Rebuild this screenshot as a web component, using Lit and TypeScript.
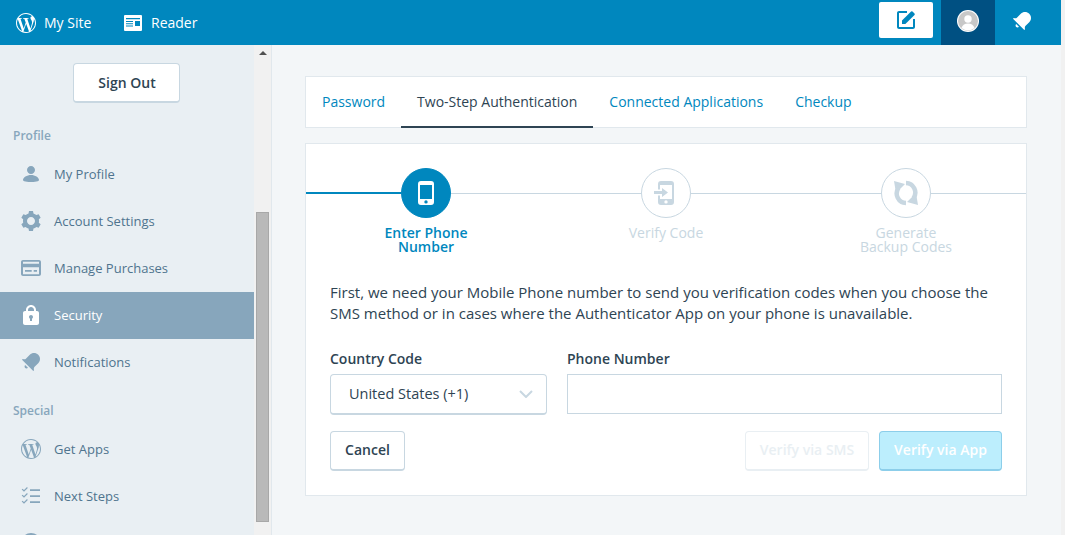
import { LitElement, html, css, svg } from "lit";
import { customElement } from "lit/decorators.js";

const P = {
  wp: "M12 2C6.477 2 2 6.477 2 12s4.477 10 10 10 10-4.477 10-10S17.523 2 12 2zM3.01 12c0-1.304.28-2.54.78-3.66l4.29 11.75C5.08 18.63 3.01 15.56 3.01 12zm8.99 8.99c-.88 0-1.73-.13-2.54-.37l2.7-7.84 2.76 7.57c.02.04.04.09.06.13-.93.33-1.93.51-2.98.51zm1.24-13.21c.54-.03 1.03-.09 1.03-.09.48-.06.43-.77-.06-.74 0 0-1.46.11-2.4.11-.88 0-2.37-.11-2.37-.11-.48-.03-.54.71-.06.74 0 0 .46.06.94.09l1.4 3.84-1.97 5.9-3.27-9.74c.54-.03 1.03-.09 1.03-.09.48-.06.43-.77-.06-.74 0 0-1.46.11-2.4.11-.17 0-.37 0-.58-.01C6.1 4.62 8.86 3.01 12 3.01c2.34 0 4.47.89 6.07 2.36-.04 0-.08-.01-.12-.01-.88 0-1.51.77-1.51 1.6 0 .74.43 1.37.88 2.11.34.6.74 1.37.74 2.48 0 .77-.3 1.66-.68 2.91l-.9 3-3.24-9.68zm3.28 12.01l2.74-7.92c.51-1.28.68-2.3.68-3.21 0-.33-.02-.64-.06-.92.7 1.28 1.1 2.75 1.1 4.32 0 3.33-1.8 6.23-4.48 7.8z",
  bell: "M6.14 14.97l2.828 2.827c-.362.362-.862.586-1.414.586-1.105 0-2-.895-2-2 0-.552.224-1.052.586-1.413zm8.867 5.324L14.3 21 3 9.7l.706-.707 1.102.157c.754.108 1.69-.122 2.077-.51l3.885-3.884c2.34-2.34 6.135-2.34 8.475 0s2.34 6.135 0 8.475l-3.885 3.886c-.388.388-.618 1.323-.51 2.077l.157 1.1z",
  cog: "M20 12c0-.568-.06-1.122-.174-1.656l1.834-1.612-2-3.464-2.322.786c-.82-.736-1.787-1.308-2.86-1.657L14 2h-4l-.48 2.396c-1.07.35-2.04.92-2.858 1.657L4.34 5.268l-2 3.464 1.834 1.612C4.06 10.878 4 11.432 4 12s.06 1.122.174 1.656L2.34 15.268l2 3.464 2.322-.786c.82.736 1.787 1.308 2.86 1.657L10 22h4l.48-2.396c1.07-.35 2.04-.92 2.858-1.657l2.322.786 2-3.464-1.834-1.613c.113-.535.174-1.09.174-1.657zm-8 4c-2.21 0-4-1.79-4-4s1.79-4 4-4 4 1.79 4 4-1.79 4-4 4z",
  user: "M12 4c2.21 0 4 1.79 4 4s-1.79 4-4 4-4-1.79-4-4 1.79-4 4-4zm0 16s8 0 8-2c0-2.4-3.9-5-8-5s-8 2.6-8 5c0 2 8 2 8 2z",
  card: "M4 4h16c1.105 0 2 .895 2 2v12c0 1.105-.895 2-2 2H4c-1.105 0-2-.895-2-2V6c0-1.105.895-2 2-2zM4 5.800v1.900h16V5.800zM4 11.300v7h16v-7zM6 14h6.700v1.700H6zM14.700 14H18v1.700h-3.300z",
  lock: "M18 8h-1V7c0-2.757-2.243-5-5-5S7 4.243 7 7v1H6c-1.105 0-2 .895-2 2v10c0 1.105.895 2 2 2h12c1.105 0 2-.895 2-2V10c0-1.105-.895-2-2-2zM9 7c0-1.654 1.346-3 3-3s3 1.346 3 3v1H9V7zm4 8.723V18h-2v-2.277c-.595-.346-1-.984-1-1.723 0-1.105.895-2 2-2s2 .895 2 2c0 .738-.405 1.376-1 1.723z",
  list: "M11 5.300h10v1.700H11zM11 11.300h10v1.700H11zM11 17.300h10v1.700H11zM3.500 4.800l1.500 1.300 3-3 .8.800-3.800 3.800-2.300-2.100zM3.500 10.800l1.500 1.300 3-3 .8.800-3.800 3.800-2.300-2.100zM3.500 16.800l1.500 1.300 3-3 .8.800-3.800 3.800-2.300-2.100z",
  circle: "M12 2C6.477 2 2 6.477 2 12s4.477 10 10 10 10-4.477 10-10S17.523 2 12 2z",
};

const icon = (d: string, cls = "") =>
  html`<svg class="ico ${cls}" viewBox="0 0 24 24" aria-hidden="true">${svg`<path fill-rule="evenodd" d=${d}></path>`}</svg>`;

type Item = { label: string; d: string; active?: boolean };

const profile: Item[] = [
  { label: "My Profile", d: P.user },
  { label: "Account Settings", d: P.cog },
  { label: "Manage Purchases", d: P.card },
  { label: "Security", d: P.lock, active: true },
  { label: "Notifications", d: P.bell },
];
const special: Item[] = [
  { label: "Get Apps", d: P.wp },
  { label: "Next Steps", d: P.list },
  { label: "", d: P.circle },
];

@customElement("app-root")
export class AppRoot extends LitElement {
  static styles = css`
    :host {
      display: block;
      width: 1065px;
      height: 535px;
      overflow: hidden;
      background: #f1f1f1;
      font-family: "Open Sans", sans-serif;
      font-size: 14px;
      color: #2e4453;
    }
    * { box-sizing: border-box; }
    .ico { display: block; width: 24px; height: 24px; fill: currentColor; flex: none; }

    .page { width: 1061px; height: 535px; display: flex; flex-direction: column; background: #f3f6f8; }
    .bar { height: 45px; flex: none; background: #0087be; color: #fff; display: flex; align-items: center; padding-right: 12px; }
    .nav { display: flex; align-items: center; height: 45px; font-size: 14px; }
    .nav.site { padding-left: 14px; gap: 6px; width: 123px; }
    .nav.reader { gap: 9px; padding-left: 1px; }
    .readerico { width: 18px; height: 16px; fill: #fff; display: block; }
    .spacer { flex: 1; }
    .write { width: 54px; height: 36px; margin-top: -6px; background: #fff; border-radius: 2px; color: #0087be; display: flex; align-items: center; justify-content: center; }
    .me { width: 54px; height: 45px; margin-left: 8px; background: #005082; display: flex; align-items: center; justify-content: center; padding-bottom: 3px; }
    .avatar { width: 22px; height: 22px; border-radius: 50%; background: #fff; padding: 1px; }
    .avatar svg { display: block; width: 20px; height: 20px; }
    .notif { width: 54px; height: 45px; display: flex; align-items: center; justify-content: center; padding-bottom: 3px; }

    .body { flex: 1; display: flex; min-height: 0; }
    .side { width: 272px; flex: none; display: flex; background: #e9eff3; border-right: 1px solid #e1e8ed; overflow: hidden; }
    .menu { width: 254px; flex: none; overflow: hidden; }
    .signout-wrap { display: flex; justify-content: center; padding: 18px 2px 0 0; }
    .btn {
      font-family: inherit; font-size: 14px; font-weight: 600; line-height: 21px; height: 40px;
      background: #fff; color: #2e4453; border: 1px solid #c8d7e1; border-bottom-width: 2px; border-radius: 4px;
      display: flex; align-items: center; justify-content: center; padding: 0; margin: 0;
    }
    .signout { width: 107px; height: 40px; padding-left: 2px; }
    .heading { font-size: 12px; font-weight: 600; color: #87a6bc; line-height: 16px; padding-left: 13px; }
    .h1 { margin-top: 25px; margin-bottom: 7px; }
    .h2 { margin-top: 17px; margin-bottom: 7px; }
    .item { height: 47px; display: flex; align-items: center; gap: 11px; padding: 0 0 2px 19px; font-size: 13px; color: #4f748e; }
    .item .ico { color: #87a6bc; }
    .item.active { background: #87a6bc; color: #fff; }
    .item.active .ico { color: #fff; }

    .sb { width: 17px; flex: none; background: #f1f1f1; display: flex; flex-direction: column; align-items: center; }
    .sb-up { width: 0; height: 0; border-left: 4px solid transparent; border-right: 4px solid transparent; border-bottom: 4px solid #505050; margin-top: 6px; flex: none; }
    .sb-thumb { width: 13px; height: 310px; margin-top: 157px; background: #b9b9b9; border: 1px solid #a8a8a8; flex: none; }

    .main { flex: 1; min-width: 0; padding: 31px 34px 0 33px; }
    .tabs { height: 52px; background: #fff; border: 1px solid #e1e8ed; display: flex; margin-bottom: 15px; }
    .tab { height: 51px; padding: 0 16px; display: flex; align-items: center; color: #0087be; font-size: 14px; border-bottom: 2px solid transparent; margin-bottom: -1px; }
    .tab.on { color: #2e4453; border-bottom-color: #2e4453; }

    .card { height: 353px; background: #fff; border: 1px solid #e1e8ed; padding-top: 24px; }
    .steps { display: grid; grid-template-columns: repeat(3, 240px); }
    .step { display: flex; flex-direction: column; align-items: center; }
    .track { width: 100%; display: flex; align-items: center; height: 50px; }
    .line { flex: 1; height: 1px; background: #c8d7e1; margin-top: 1px; }
    .line.blue { height: 2px; background: #0087be; margin-top: -1px; }
    .circle { width: 50px; height: 50px; border-radius: 50%; border: 1px solid #c8d7e1; color: #c8d7e1; display: flex; align-items: center; justify-content: center; flex: none; background: #fff; }
    .circle.on { background: #0087be; border-color: #0087be; }
    .circle svg { display: block; }
    .verify-ico { margin-right: 4px; }
    .label { margin-top: 8px; font-size: 14px; font-weight: 400; line-height: 14px; text-align: center; color: #c8d7e1; width: 110px; height: 28px; }
    .label.on { color: #0087be; font-weight: 600; }

    .form { padding: 0 24px; margin-top: 28px; }
    .intro { margin: 0; font-size: 15px; line-height: 21px; color: #2e4453; }
    .fields { display: flex; gap: 20px; margin-top: 24px; }
    .f1 { width: 217px; }
    .f2 { flex: 1; }
    .flabel { display: block; font-size: 14px; font-weight: 600; line-height: 21px; margin-bottom: 5px; color: #2e4453; }
    .select { height: 41px; border: 1px solid #c8d7e1; border-bottom-width: 2px; border-radius: 4px; display: flex; align-items: center; justify-content: space-between; padding: 0 13px 1px 18px; font-size: 14.5px; color: #2e4453; }
    .input { height: 40px; border: 1px solid #c8d7e1; }
    .actions { display: flex; align-items: center; margin-top: 16px; gap: 10px; }
    .actions .btn { padding-bottom: 2px; }
    .cancel { width: 75px; }
    .sms { width: 124px; color: #e9eff3; border-color: #e9eff3; }
    .app { width: 123px; background: #bceefd; color: #fff; border-color: #8cceea; }
  `;

  private row(i: Item) {
    return html`<div class="item ${i.active ? "active" : ""}">${icon(i.d)}${i.label ? html`<span>${i.label}</span>` : ""}</div>`;
  }

  render() {
    return html`
      <div class="page">
        <header class="bar">
          <div class="nav site">${icon(P.wp)}<span>My Site</span></div>
          <div class="nav reader">
            <svg class="readerico" viewBox="0 0 18 16" aria-hidden="true"><path fill-rule="evenodd" d="M1 0h16a1 1 0 0 1 1 1v14a1 1 0 0 1-1 1H1a1 1 0 0 1-1-1V1a1 1 0 0 1 1-1zM2 3v1.200h14V3zM11 6v5h5V6zM2 6v1h7V6zM2 8.300v1h7v-1zM2 10.600v1h7v-1z"></path></svg>
            <span>Reader</span>
          </div>
          <div class="spacer"></div>
          <div class="write">
            <svg class="ico" viewBox="0 0 24 24" aria-hidden="true"><path d="M13 3v2H5v14h14v-8h2v8c0 1.100-.9 2-2 2H5c-1.100 0-2-.9-2-2V5c0-1.100.9-2 2-2z"></path><path d="M18.500 3.500l2 2a1 1 0 0 1 0 1.400L11.400 16H8v-3.400l9.100-9.100a1 1 0 0 1 1.400 0z"></path></svg>
          </div>
          <div class="me">
            <div class="avatar">
              <svg viewBox="0 0 20 20" aria-hidden="true"><circle cx="10" cy="10" r="10" fill="#c8c8c8"></circle><circle cx="10" cy="8" r="3.700" fill="#fff"></circle><path d="M3.500 17c1-3.200 3.500-4.500 6.500-4.500s5.500 1.300 6.500 4.500a10 10 0 0 1-13 0z" fill="#fff"></path></svg>
            </div>
          </div>
          <div class="notif">${icon(P.bell)}</div>
        </header>
        <div class="body">
          <aside class="side">
            <div class="menu">
              <div class="signout-wrap"><div class="btn signout">Sign Out</div></div>
              <div class="heading h1">Profile</div>
              ${profile.map((i) => this.row(i))}
              <div class="heading h2">Special</div>
              ${special.map((i) => this.row(i))}
            </div>
            <div class="sb"><div class="sb-up"></div><div class="sb-thumb"></div></div>
          </aside>
          <main class="main">
            <nav class="tabs">
              <div class="tab">Password</div>
              <div class="tab on">Two-Step Authentication</div>
              <div class="tab">Connected Applications</div>
              <div class="tab">Checkup</div>
            </nav>
            <section class="card">
              <div class="steps">
                <div class="step">
                  <div class="track">
                    <div class="line blue"></div>
                    <div class="circle on">
                      <svg width="16" height="24" viewBox="0 0 16 24" aria-hidden="true"><path fill="#fff" fill-rule="evenodd" d="M3 0h10a3 3 0 0 1 3 3v18a3 3 0 0 1-3 3H3a3 3 0 0 1-3-3V3a3 3 0 0 1 3-3zM2 4v14h12V4zM8 19.200a1.700 1.700 0 1 0 0 3.400a1.700 1.700 0 0 0 0-3.400z"></path></svg>
                    </div>
                    <div class="line"></div>
                  </div>
                  <div class="label on">Enter Phone Number</div>
                </div>
                <div class="step">
                  <div class="track">
                    <div class="line"></div>
                    <div class="circle">
                      <svg class="verify-ico" width="20" height="24" viewBox="0 0 20 24" aria-hidden="true"><path fill="currentColor" fill-rule="evenodd" d="M7 0h10a3 3 0 0 1 3 3v18a3 3 0 0 1-3 3H7a3 3 0 0 1-3-3v-6.500h2V18h12V4H6v4.500H4V3a3 3 0 0 1 3-3zM12 19.200a1.700 1.700 0 1 0 0 3.400a1.700 1.700 0 0 0 0-3.400z"></path><path fill="currentColor" d="M0 10h8V7l6 4.500-6 4.500v-3H0z"></path></svg>
                    </div>
                    <div class="line"></div>
                  </div>
                  <div class="label">Verify Code</div>
                </div>
                <div class="step">
                  <div class="track">
                    <div class="line"></div>
                    <div class="circle">
                      <svg width="26" height="26" viewBox="0 0 26 26" aria-hidden="true"><path fill="none" stroke="currentColor" stroke-width="4.500" d="M13 23A9.500 9.500 0 0 1 5.500 8"></path><path fill="none" stroke="currentColor" stroke-width="4.500" d="M13 3A9.500 9.500 0 0 1 20.500 18"></path><path fill="currentColor" d="M1 1l11 3-9 9zM25 25l-11-3 9-9z"></path></svg>
                    </div>
                    <div class="line"></div>
                  </div>
                  <div class="label">Generate Backup Codes</div>
                </div>
              </div>
              <div class="form">
                <p class="intro">First, we need your Mobile Phone number to send you verification codes when you choose the SMS method or in cases where the Authenticator App on your phone is unavailable.</p>
                <div class="fields">
                  <div class="f1">
                    <span class="flabel">Country Code</span>
                    <div class="select">
                      <span>United States (+1)</span>
                      <svg width="14" height="8" viewBox="0 0 14 8" aria-hidden="true"><path fill="none" stroke="#c8d7e1" stroke-width="2" d="M1 1l6 6 6-6"></path></svg>
                    </div>
                  </div>
                  <div class="f2">
                    <span class="flabel">Phone Number</span>
                    <div class="input"></div>
                  </div>
                </div>
                <div class="actions">
                  <div class="btn cancel">Cancel</div>
                  <div class="spacer"></div>
                  <div class="btn sms">Verify via SMS</div>
                  <div class="btn app">Verify via App</div>
                </div>
              </div>
            </section>
          </main>
        </div>
      </div>
    `;
  }
}
